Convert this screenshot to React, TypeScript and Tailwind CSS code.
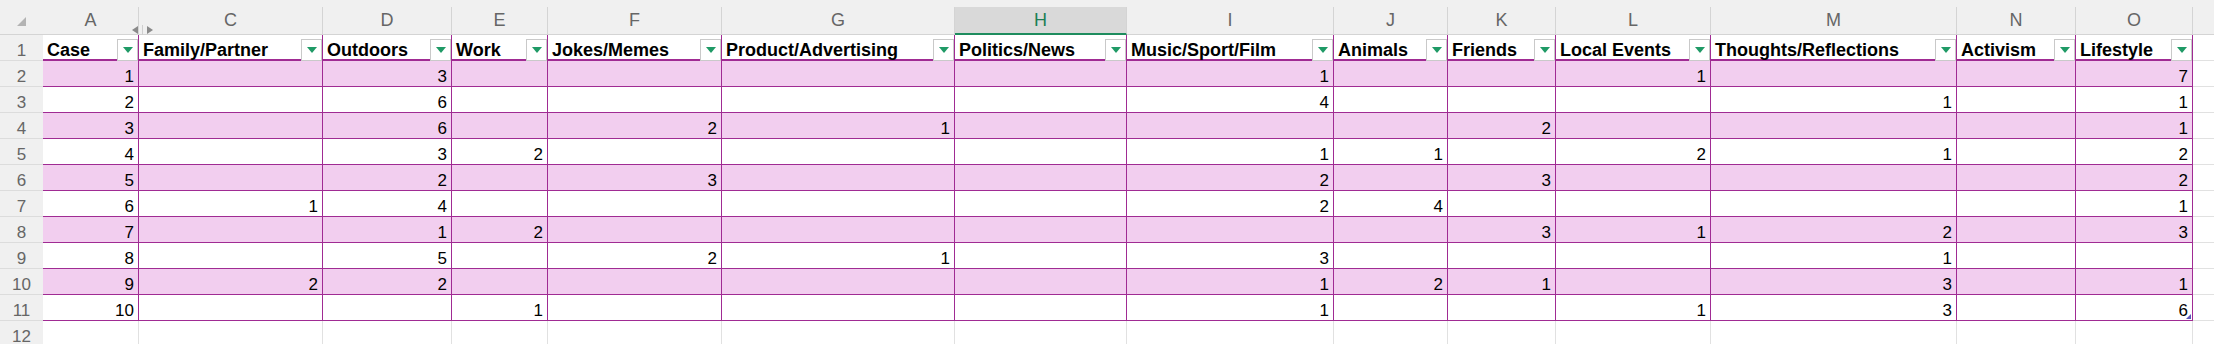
import React from "react"

type Col = {
  letter: string
  name: string
  w: string
}

const cols: Col[] = [
  { letter: "A", name: "Case", w: "w-[96px]" },
  { letter: "C", name: "Family/Partner", w: "w-[184px]" },
  { letter: "D", name: "Outdoors", w: "w-[129px]" },
  { letter: "E", name: "Work", w: "w-[96px]" },
  { letter: "F", name: "Jokes/Memes", w: "w-[174px]" },
  { letter: "G", name: "Product/Advertising", w: "w-[233px]" },
  { letter: "H", name: "Politics/News", w: "w-[172px]" },
  { letter: "I", name: "Music/Sport/Film", w: "w-[207px]" },
  { letter: "J", name: "Animals", w: "w-[114px]" },
  { letter: "K", name: "Friends", w: "w-[108px]" },
  { letter: "L", name: "Local Events", w: "w-[155px]" },
  { letter: "M", name: "Thoughts/Reflections", w: "w-[246px]" },
  { letter: "N", name: "Activism", w: "w-[119px]" },
  { letter: "O", name: "Lifestyle", w: "w-[117px]" },
]

const _ = null
const rows: (number | null)[][] = [
  [1, _, 3, _, _, _, _, 1, _, _, 1, _, _, 7],
  [2, _, 6, _, _, _, _, 4, _, _, _, 1, _, 1],
  [3, _, 6, _, 2, 1, _, _, _, 2, _, _, _, 1],
  [4, _, 3, 2, _, _, _, 1, 1, _, 2, 1, _, 2],
  [5, _, 2, _, 3, _, _, 2, _, 3, _, _, _, 2],
  [6, 1, 4, _, _, _, _, 2, 4, _, _, _, _, 1],
  [7, _, 1, 2, _, _, _, _, _, 3, 1, 2, _, 3],
  [8, _, 5, _, 2, 1, _, 3, _, _, _, 1, _, _],
  [9, 2, 2, _, _, _, _, 1, 2, 1, _, 3, _, 1],
  [10, _, _, 1, _, _, _, 1, _, _, 1, 3, _, 6],
]

function FilterButton() {
  return (
    <div className="mt-[4px] h-[22px] w-[21px] shrink-0 border border-[#c9c9c9] bg-white flex items-center justify-center">
      <svg width="10" height="6" viewBox="0 0 10 6">
        <polygon points="0,0 10,0 5,6" fill="#1f9a66" />
      </svg>
    </div>
  )
}

function RowHead({ n }: { n: number }) {
  return (
    <div className="w-[43px] shrink-0 h-full bg-[#f0f0f0] border-b border-[#dcdcdc] flex items-end justify-center text-[17px] leading-[19px] text-[#666666]">
      <span>{n}</span>
    </div>
  )
}

export default function App() {
  return (
    <div className="w-[2214px] h-[344px] overflow-hidden bg-white font-['Liberation_Sans',Arial,sans-serif] text-black">
      <div className="h-[7px] bg-[#f0f0f0]" />

      {/* column letters */}
      <div className="relative flex h-[28px] bg-[#f0f0f0]">
        <div className="w-[43px] shrink-0 border-b border-[#d4d4d4] flex items-end justify-center pb-[8px]">
          <svg width="9" height="9" viewBox="0 0 9 9">
            <polygon points="9,0 9,9 0,9" fill="#b3b3b3" />
          </svg>
        </div>
        {cols.map(c =>
          c.letter === "H" ? (
            <div key={c.letter} className={`${c.w} shrink-0 bg-[#d9d9d9] border-r border-[#d4d4d4] border-b-2 border-b-[#1e8c5e] flex items-center justify-center text-[18px] text-[#1c7f55]`}>
              {c.letter}
            </div>
          ) : (
            <div key={c.letter} className={`${c.w} shrink-0 border-r border-b border-[#d4d4d4] flex items-center justify-center text-[18px] text-[#666666]`}>
              {c.letter}
            </div>
          )
        )}
        <div className="flex-1 border-b border-[#d4d4d4]" />
        {/* hidden column B marker */}
        <div className="absolute left-[132px] top-[18px] flex items-center gap-[4px]">
          <svg width="6" height="8" viewBox="0 0 6 8">
            <polygon points="6,0 6,8 0,4" fill="#8a8a8a" />
          </svg>
          <div className="w-[1px] h-[10px] bg-[#cfcfcf]" />
          <svg width="6" height="8" viewBox="0 0 6 8">
            <polygon points="0,0 0,8 6,4" fill="#8a8a8a" />
          </svg>
        </div>
      </div>

      {/* table header row */}
      <div className="flex h-[26px]">
        <RowHead n={1} />
        {cols.map(c => (
          <div key={c.name} className={`${c.w} shrink-0 bg-white border-r border-[#a02b93] border-b-2 border-b-[#a02b93] flex items-start justify-between`}>
            <span className="mt-[5px] pl-[4px] leading-[20px] text-[18px] font-bold whitespace-nowrap">{c.name}</span>
            <FilterButton />
          </div>
        ))}
        <div className="flex-1 border-b border-[#e1e1e1]" />
      </div>

      {/* data rows */}
      {rows.map((r, i) => (
        <div key={i} className="flex h-[26px]">
          <RowHead n={i + 2} />
          {cols.map((c, j) => (
            <div
              key={c.name}
              className={`${c.w} shrink-0 relative border-r border-b border-[#a02b93] flex items-end justify-end pr-[4px] text-[17px] leading-[19px] ${i % 2 === 0 ? "bg-[#f2ceef]" : "bg-white"}`}
            >
              {r[j] !== null && <span>{r[j]}</span>}
              {i === rows.length - 1 && j === cols.length - 1 && (
                <svg className="absolute right-[1px] bottom-[1px]" width="5" height="5" viewBox="0 0 5 5">
                  <polygon points="5,0 5,5 0,5" fill="#5b57b8" />
                </svg>
              )}
            </div>
          ))}
          <div className="flex-1 border-b border-[#e1e1e1]" />
        </div>
      ))}

      {/* empty row 12 */}
      <div className="flex h-[26px]">
        <RowHead n={12} />
        {cols.map(c => (
          <div key={c.name} className={`${c.w} shrink-0 border-r border-[#e1e1e1]`} />
        ))}
        <div className="flex-1" />
      </div>
    </div>
  )
}
